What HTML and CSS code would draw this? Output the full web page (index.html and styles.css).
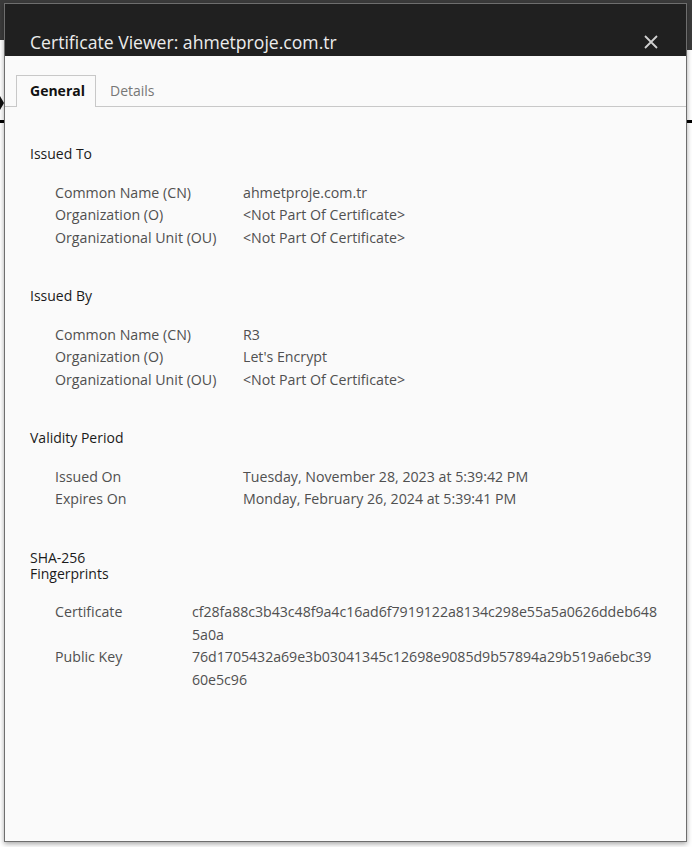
FILE: index.html
```html
<!DOCTYPE html>
<html lang="en">
<head>
<meta charset="utf-8">
<title>Certificate Viewer</title>
<link rel="stylesheet" href="styles.css">
</head>
<body>
<div class="backdrop">
  <div class="backdrop-top"><div class="backdrop-top-right"></div></div>
  <div class="backdrop-rule"></div>
  <div class="backdrop-mark"></div>
</div>

<div class="dialog" role="dialog" aria-label="Certificate Viewer">
  <div class="dialog-header">
    <h1 class="dialog-title">Certificate Viewer: ahmetproje.com.tr</h1>
    <button class="close-btn" aria-label="Close">
      <svg width="14" height="14" viewBox="0 0 14 14"><path d="M1 1 L13 13 M13 1 L1 13" stroke="#d0d0d0" stroke-width="1.8" fill="none"/></svg>
    </button>
  </div>

  <div class="tabs">
    <div class="tab active">General</div>
    <div class="tab">Details</div>
  </div>

  <div class="content">
    <section class="section">
      <h2 class="section-title">Issued To</h2>
      <div class="rows">
        <div class="label">Common Name (CN)</div><div class="value">ahmetproje.com.tr</div>
        <div class="label">Organization (O)</div><div class="value">&lt;Not Part Of Certificate&gt;</div>
        <div class="label">Organizational Unit (OU)</div><div class="value">&lt;Not Part Of Certificate&gt;</div>
      </div>
    </section>

    <section class="section">
      <h2 class="section-title">Issued By</h2>
      <div class="rows">
        <div class="label">Common Name (CN)</div><div class="value">R3</div>
        <div class="label">Organization (O)</div><div class="value">Let's Encrypt</div>
        <div class="label">Organizational Unit (OU)</div><div class="value">&lt;Not Part Of Certificate&gt;</div>
      </div>
    </section>

    <section class="section">
      <h2 class="section-title">Validity Period</h2>
      <div class="rows">
        <div class="label">Issued On</div><div class="value">Tuesday, November 28, 2023 at 5:39:42 PM</div>
        <div class="label">Expires On</div><div class="value">Monday, February 26, 2024 at 5:39:41 PM</div>
      </div>
    </section>

    <section class="section">
      <h2 class="section-title">SHA-256 Fingerprints</h2>
      <div class="rows rows-fp">
        <div class="label">Certificate</div><div class="value hex">cf28fa88c3b43c48f9a4c16ad6f7919122a8134c298e55a5a0626ddeb648<br>5a0a</div>
        <div class="label">Public Key</div><div class="value hex">76d1705432a69e3b03041345c12698e9085d9b57894a29b519a6ebc39<br>60e5c96</div>
      </div>
    </section>
  </div>
</div>
</body>
</html>
```

FILE: styles.css
```css
* { box-sizing: border-box; }

html, body {
  margin: 0;
  padding: 0;
  width: 692px;
  height: 847px;
  overflow: hidden;
  background: #ffffff;
  font-family: "Open Sans", "Noto Sans", "Liberation Sans", sans-serif;
}

body { position: relative; }

.backdrop-top {
  height: 40px;
  background: #3b3b3b;
  display: flex;
  justify-content: flex-end;
}

.backdrop-top-right {
  width: 8px;
  height: 50px;
  background: #3b3b3b;
}

.backdrop-rule {
  margin-top: 80px;
  height: 3px;
  background: #000;
}

.backdrop-mark {
  position: absolute;
  left: 0;
  top: 96px;
  width: 0;
  height: 0;
  border-top: 7px solid transparent;
  border-bottom: 7px solid transparent;
  border-left: 4px solid #111;
}

.dialog {
  position: absolute;
  left: 4px;
  top: 3px;
  width: 683px;
  height: 839px;
  background: #fafafa;
  border: 1px solid #6e6e6e;
  box-shadow: 0 2px 5px rgba(0, 0, 0, 0.35);
  display: flex;
  flex-direction: column;
}

.dialog-header {
  height: 52px;
  background: #202020;
  display: flex;
  align-items: flex-end;
  justify-content: space-between;
  padding: 0 28px 2px 25px;
  flex: none;
}

.dialog-title {
  margin: 0;
  font-weight: 400;
  font-size: 17.6px;
  line-height: 24px;
  color: #ececec;
}

.close-btn {
  background: none;
  border: 0;
  padding: 0;
  margin-bottom: 5px;
  width: 14px;
  height: 14px;
  display: block;
}
.close-btn svg { display: block; }

.tabs {
  display: flex;
  align-items: flex-end;
  padding: 19px 0 0 11px;
  border-bottom: 1px solid #c8c8c8;
  flex: none;
}

.tab {
  height: 31px;
  line-height: 30px;
  font-size: 14px;
  color: #777;
  padding: 0 13px;
  border: 1px solid transparent;
  border-bottom: 0;
}

.tab.active {
  width: 80px;
  font-weight: 700;
  color: #111;
  border-color: #c8c8c8;
  background: #fafafa;
  margin-bottom: -1px;
  height: 32px;
}

.content {
  padding: 39px 0 0 25px;
}

.section + .section { margin-top: 38.75px; }

.section-title {
  margin: 0 0 19.75px;
  font-weight: 400;
  font-size: 14px;
  line-height: 16px;
  color: #1a1a1a;
  max-width: 110px;
}

.rows {
  display: grid;
  grid-template-columns: 188px auto;
  padding-left: 25px;
  font-size: 14.2px;
  line-height: 22.5px;
  color: #505050;
}

.rows-fp { grid-template-columns: 137px auto; }

.hex { white-space: nowrap; letter-spacing: -0.05px; }
```
